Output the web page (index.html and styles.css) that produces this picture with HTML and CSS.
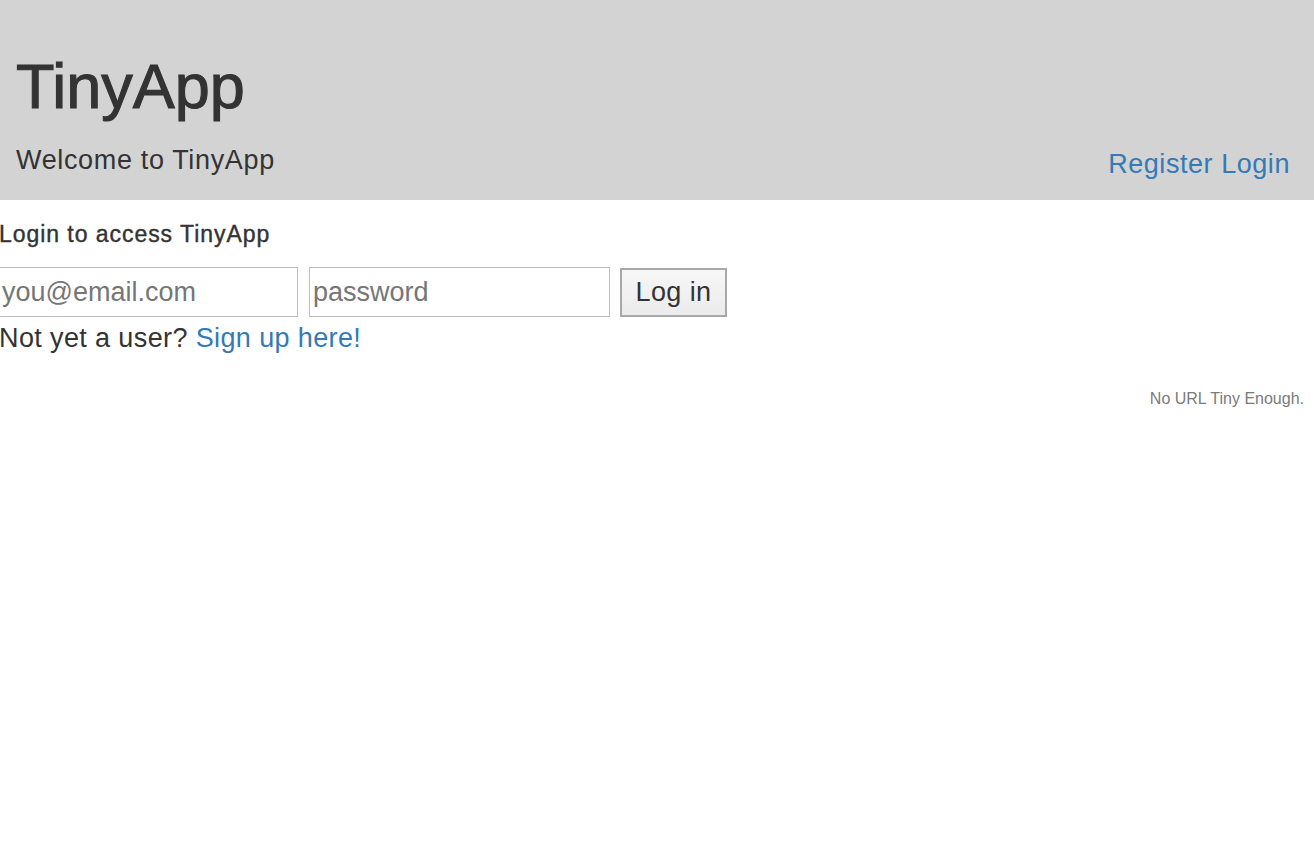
FILE: index.html
```html
<!DOCTYPE html>
<html lang="en">
<head>
<meta charset="utf-8">
<title>TinyApp</title>
<link rel="stylesheet" href="styles.css">
</head>
<body>
<header class="masthead">
  <div class="brand">
    <h1 class="brand-title">TinyApp</h1>
    <p class="brand-tagline">Welcome to TinyApp</p>
  </div>
  <nav class="nav">
    <a href="#" class="nav-link">Register</a> <a href="#" class="nav-link">Login</a>
  </nav>
</header>
<main class="content">
  <h4 class="section-title">Login to access TinyApp</h4>
  <form class="login-form">
    <input class="field field-email" type="email" placeholder="you@email.com">
    <input class="field field-password" type="password" placeholder="password">
    <button class="btn" type="button">Log in</button>
  </form>
  <p class="signup">Not yet a user? <a href="#" class="link">Sign up here!</a></p>
</main>
<footer class="footer">No URL Tiny Enough.</footer>
</body>
</html>
```
FILE: styles.css
```css
html, body {
  margin: 0;
  padding: 0;
  background: #ffffff;
}

body {
  font-family: "Liberation Sans", Arial, Helvetica, sans-serif;
  color: #333333;
}

a {
  color: #337ab7;
  text-decoration: none;
}

.masthead {
  box-sizing: border-box;
  height: 200px;
  background: #d3d3d3;
  display: flex;
  justify-content: space-between;
  align-items: flex-end;
  padding: 0 24px 0 16px;
}

.brand {
  padding: 52px 0 24px;
}

.brand-title {
  margin: 0;
  font-size: 63px;
  font-weight: normal;
  line-height: 70px;
  letter-spacing: 0;
  -webkit-text-stroke: 1.1px #333333;
}

.brand-tagline {
  margin: 24px 0 0;
  font-size: 27px;
  line-height: 31px;
  letter-spacing: 0.65px;
}

.nav {
  padding-bottom: 20px;
  font-size: 27px;
  line-height: 31px;
  letter-spacing: 0.55px;
}

.nav-link {
  color: #337ab7;
}

.content {
  padding: 0;
  margin-left: -1px;
}

.section-title {
  margin: 21px 0 0;
  font-size: 23px;
  line-height: 26px;
  font-weight: normal;
  letter-spacing: 0.95px;
  -webkit-text-stroke: 0.4px #333333;
}

.login-form {
  display: flex;
  align-items: flex-start;
  gap: 11px;
  margin: 20px 0 0;
}

.field {
  box-sizing: border-box;
  width: 301px;
  height: 50px;
  margin: 0;
  padding: 1px 3px;
  border: 1px solid #bdbdbd;
  border-radius: 0;
  background: #ffffff;
  font-family: "Liberation Sans", Arial, sans-serif;
  font-size: 27px;
  color: #333333;
  outline: none;
}

.field-email {
  margin-left: -1px;
  width: 300px;
}

.field::placeholder {
  color: #767676;
}

.btn {
  box-sizing: border-box;
  width: 107px;
  height: 49px;
  margin: 1px 0 0 -1px;
  padding: 0;
  border: 2px solid #a8a8a8;
  border-radius: 0;
  background: linear-gradient(#f7f7f7, #ebebeb);
  font-family: "Liberation Sans", Arial, sans-serif;
  font-size: 27px;
  letter-spacing: 0.4px;
  color: #333333;
}

.signup {
  margin: 6px 0 0;
  font-size: 27px;
  line-height: 31px;
  letter-spacing: 0.38px;
}

.link {
  color: #337ab7;
}

.footer {
  margin-top: 36px;
  padding-right: 10px;
  text-align: right;
  font-size: 16px;
  line-height: 18px;
  color: #7b7b7b;
}
```
